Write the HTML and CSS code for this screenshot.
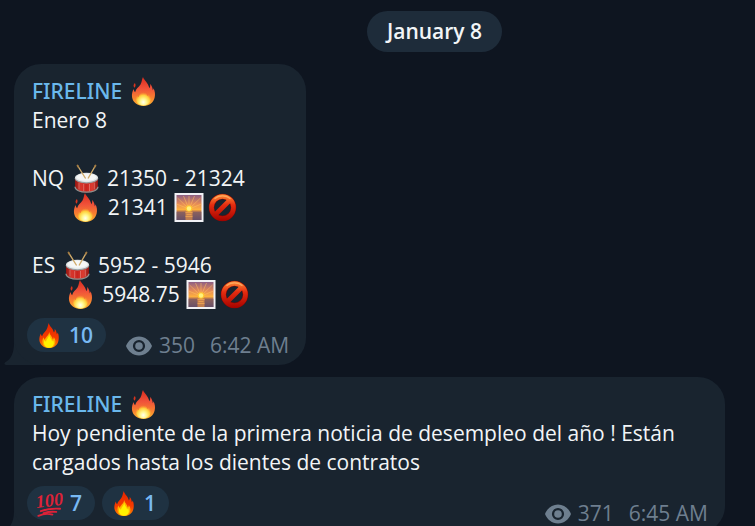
FILE: index.html
```html
<!DOCTYPE html>
<html lang="es">
<head>
<meta charset="utf-8">
<title>FIRELINE</title>
<link rel="stylesheet" href="styles.css">
</head>
<body>
<svg class="sprite" aria-hidden="true">
  <defs>
    <linearGradient id="flame" x1="0" y1="0" x2="0" y2="1">
      <stop offset="0" stop-color="#d92c1e"/><stop offset=".4" stop-color="#f0523a"/><stop offset=".72" stop-color="#f8812f"/><stop offset="1" stop-color="#ffb832"/>
    </linearGradient>
    <radialGradient id="glow" cx=".5" cy=".8" r=".6">
      <stop offset="0" stop-color="#fffff0"/><stop offset=".35" stop-color="#fff68a"/><stop offset=".7" stop-color="#ffcf3c"/><stop offset="1" stop-color="#fb9a35" stop-opacity="0"/>
    </radialGradient>
    <linearGradient id="hot" x1="0" y1="0" x2="0" y2="1">
      <stop offset="0" stop-color="#e32400"/><stop offset=".6" stop-color="#f53b00"/><stop offset="1" stop-color="#ff8a00"/>
    </linearGradient>
    <linearGradient id="shell" x1="0" y1="0" x2="1" y2="0">
      <stop offset="0" stop-color="#8e1612"/><stop offset=".25" stop-color="#d8362c"/><stop offset=".5" stop-color="#c9251f"/><stop offset=".75" stop-color="#dd3d31"/><stop offset="1" stop-color="#8e1612"/>
    </linearGradient>
    <linearGradient id="sky" x1="0" y1="0" x2="0" y2="1">
      <stop offset="0" stop-color="#8c5f85"/><stop offset=".35" stop-color="#e58a57"/><stop offset=".6" stop-color="#ffb33c"/><stop offset=".64" stop-color="#b9784f"/><stop offset="1" stop-color="#685069"/>
    </linearGradient>
    <linearGradient id="ban" gradientUnits="userSpaceOnUse" x1="0" y1="2" x2="0" y2="27">
      <stop offset="0" stop-color="#ff8a35"/><stop offset=".4" stop-color="#e42c10"/><stop offset="1" stop-color="#a90500"/>
    </linearGradient>
  </defs>
  <symbol id="fire" viewBox="0 0 31 29">
    <path fill="url(#flame)" d="M14.500 0c.8 3 5.500 6.200 6.300 11.200.9-.9 1.200-2.700.7-4.400 2.300 2.400 2.500 4.600 2.800 6.500.5-.5.7-1.200.7-2 1.500 3 1.900 5.800 1.200 9C25.200 25.500 21 29 15 29 9 29 4.500 25.400 3.600 20.500c-.6-3.600.5-6.500 1.400-8.500.4 1.500.7 2.400 1.600 3.200C7.600 11.500 10 10.500 12 7.500 13.500 5 13.200 2.200 14.500 0z"/>
    <path fill="#d8341e" d="M6.400 6c1.100 1.700.7 3-.2 4.800C4.500 9.500 4.800 7.700 6.400 6z"/>
    <path fill="url(#glow)" d="M15 12c1 3 3.500 4.500 4 7 1-.6 1.300-1.600 1.300-2.800 2.400 2.800 2.900 6 1.200 8.900-1.400 2.300-3.600 3.400-6.500 3.400s-5.500-1.300-6.800-3.500c-1.600-2.700-1-5.500.2-7.700.2 1.400.7 2.300 1.700 2.900.3-3.500 3.900-4.400 4.900-8.200z"/>
  </symbol>
  <symbol id="fire-hot" viewBox="0 0 20 25">
    <path fill="url(#hot)" d="M9.700 0c.4 3 4.300 5 5.200 9.500.8-.8 1-2.200.7-3.700 1.900 2.100 2 3.900 2.200 5.500.5-.4.8-1 .9-1.700C20 12.500 20 15 19.400 18 18.400 22.300 15 25 10 25S1.400 22.200.5 18C0 15.200.8 12.500 1.900 10.500c.1 1.300.5 2 1.200 2.700C3.900 10.500 5.500 9.500 7.300 7 8.800 4.900 8.800 2 9.700 0z"/>
    <path fill="#ffb000" d="M10.300 9c.5 3.300 3.200 4.500 3.400 7.500.8-.6 1-1.300 1-2.400 2 2.600 2.300 5.500.8 7.900-1.200 2-3.200 3-5.500 3s-4.600-1-5.700-3c-1.400-2.500-1-5.300.2-7.700.2 1.300.6 2 1.400 2.500C6.300 14 9.700 13 10.300 9z"/>
    <path fill="#fff200" d="M10.300 12c.4 3 2.700 4 2.700 6.500.6-.3.900-.9 1-1.500 2 3.400.4 7.700-4 7.700s-6-4.200-4.400-7.700c.3.900.7 1.400 1.400 1.700.1-2.700 2.800-3.900 3.300-6.700z"/>
  </symbol>
  <symbol id="drum" viewBox="0 0 31 29">
    <path fill="url(#shell)" d="M4.500 14v9c0 3 5 5.300 11.500 5.300S27.500 26 27.500 23v-9z"/>
    <path fill="none" stroke="#8d918f" stroke-width="1.200" d="M4.500 22.800c0 3.200 5 5.400 11.500 5.400s11.500-2.200 11.500-5.400"/>
    <path fill="none" stroke="#efa39a" stroke-width=".5" d="M8.500 18.500v7M13.200 20v7M19 20v7M23.800 18.500v7"/>
    <ellipse cx="16" cy="14.500" rx="11.700" ry="5" fill="#9a9fa1"/>
    <ellipse cx="16" cy="13.500" rx="11.500" ry="4.700" fill="#e5e9ea"/>
    <ellipse cx="16" cy="13.300" rx="9.800" ry="3.500" fill="#f6f7f6"/>
    <path stroke="#cfaa6a" stroke-width="1.400" stroke-linecap="round" d="M7.300 2l7.500 12M24.700 2l-6.900 12"/>
    <path stroke="#a27b43" stroke-width="1.800" stroke-linecap="round" d="M7 1.500l.7 1.200M25 1.500l-.7 1.200"/>
  </symbol>
  <symbol id="sunrise" viewBox="0 0 31 29">
    <path fill="#f1f1f5" d="M1 0h29v29H1z"/>
    <path fill="url(#sky)" d="M3 2h25v25H3z"/>
    <path stroke="#ffc260" stroke-width=".9" opacity=".6" d="M15.500 16V3M15.500 16L10 3M15.500 16L21 3M15.500 16L4 5M15.500 16L27 5M15.500 16L3 11M15.500 16L28 11"/>
    <path fill="#675068" opacity=".5" d="M3 19h9v8H3zM19 19h9v8h-9z"/>
    <path fill="#d4884b" opacity=".8" d="M12 18h7v9h-7z"/>
    <path stroke="#f4aa52" stroke-width=".7" d="M12 19.500h7M13 21.500h5M12 23.500h7"/>
    <circle cx="15.500" cy="15.500" r="3.300" fill="#ffc52d"/>
    <circle cx="15.500" cy="15.500" r="2.200" fill="#fff27c"/>
  </symbol>
  <symbol id="banned" viewBox="0 0 31 29">
    <circle cx="17" cy="14.500" r="11" fill="none" stroke="#8d0500" stroke-width="5.400"/>
    <path stroke="url(#ban)" stroke-width="4.800" d="M9.500 22L24.500 7"/>
    <circle cx="17" cy="14.500" r="11" fill="none" stroke="url(#ban)" stroke-width="4.600"/>
    <path fill="none" stroke="#ffb169" stroke-width="1.200" opacity=".8" d="M9 5.800c4.300-4 11.600-4 16 0"/>
  </symbol>
  <symbol id="hundred" viewBox="0 0 28 28">
    <text class="hundred-text" x="0" y="17" transform="rotate(-7 14 14)">100</text>
    <path fill="none" stroke="#dd2238" stroke-width="2" stroke-linecap="round" d="M5 22Q14 18.700 25 19.500M8 24Q14 22 21 22.700M2.500 26.800Q10 23.500 17 25.500"/>
  </symbol>
  <symbol id="eye" viewBox="0 0 26 20">
    <path fill="#6e7f8f" fill-rule="evenodd" d="M13 .5C7 .5 2.200 4.400 0 10c2.200 5.600 7 9.500 13 9.500S23.800 15.600 26 10C23.800 4.400 19 .5 13 .5zM13 3.900a6.100 6.100 0 1 1 0 12.200 6.100 6.100 0 0 1 0-12.200z"/>
    <circle cx="13" cy="10" r="3.800" fill="#6e7f8f"/>
  </symbol>
</svg>
<main class="chat">
  <time class="date">January 8</time>

  <article class="bubble">
    <h2 class="author">FIRELINE <svg class="emoji" role="img" aria-label="🔥"><use href="#fire"/></svg></h2>
    <p class="text">Enero 8

NQ <svg class="emoji" role="img" aria-label="🥁"><use href="#drum"/></svg> 21350 - 21324
       <svg class="emoji" role="img" aria-label="🔥"><use href="#fire"/></svg> 21341 <svg class="emoji" role="img" aria-label="🌅"><use href="#sunrise"/></svg><svg class="emoji" role="img" aria-label="🚫"><use href="#banned"/></svg>

ES <svg class="emoji" role="img" aria-label="🥁"><use href="#drum"/></svg> 5952 - 5946
      <svg class="emoji" role="img" aria-label="🔥"><use href="#fire"/></svg> 5948.75 <svg class="emoji" role="img" aria-label="🌅"><use href="#sunrise"/></svg><svg class="emoji" role="img" aria-label="🚫"><use href="#banned"/></svg></p>
    <footer class="footer">
      <div class="reactions">
        <button class="reaction" type="button"><svg class="flame" role="img" aria-label="🔥"><use href="#fire-hot"/></svg>10</button>
      </div>
      <div class="meta"><svg class="eye" role="img" aria-label="Views"><use href="#eye"/></svg><span>350</span><time class="time">6:42 AM</time></div>
    </footer>
    <svg class="tail" viewBox="0 0 36 28" aria-hidden="true"><path d="M10 0v6C10 16 7 22 1 25.500Q-1 28 4 28H36V0z"/></svg>
  </article>

  <article class="bubble">
    <h2 class="author">FIRELINE <svg class="emoji" role="img" aria-label="🔥"><use href="#fire"/></svg></h2>
    <p class="text">Hoy pendiente de la primera noticia de desempleo del año ! Están cargados hasta los dientes de contratos</p>
    <footer class="footer">
      <div class="reactions">
        <button class="reaction" type="button"><svg class="hundred" role="img" aria-label="💯"><use href="#hundred"/></svg>7</button>
        <button class="reaction" type="button"><svg class="flame" role="img" aria-label="🔥"><use href="#fire-hot"/></svg>1</button>
      </div>
      <div class="meta"><svg class="eye" role="img" aria-label="Views"><use href="#eye"/></svg><span>371</span><time class="time">6:45 AM</time></div>
    </footer>
    <svg class="tail" viewBox="0 0 36 28" aria-hidden="true"><path d="M10 0v6C10 16 7 22 1 25.500Q-1 28 4 28H36V0z"/></svg>
  </article>
</main>
</body>
</html>
```
FILE: styles.css
```css
* {
  box-sizing: border-box;
}

body {
  margin: 0;
  background: #0e1520;
  color: #f2f5f7;
  font: 21px/29px "Open Sans", "Noto Sans", sans-serif;
}

.sprite {
  position: absolute;
  width: 0;
  height: 0;
}

.chat {
  display: flex;
  flex-direction: column;
  align-items: flex-start;
  gap: 12px;
  height: 100vh;
  padding: 11px 30px 0 14px;
  overflow: hidden;
}

.date {
  align-self: center;
  flex-shrink: 0;
  margin-left: 130px;
  padding: 6px 20px;
  border-radius: 21px;
  background: #1e2c3a;
  font-weight: 600;
}

.bubble {
  position: relative;
  flex-shrink: 0;
  padding: 13px 17px 13px 18px;
  border-radius: 27px;
  background: #19242f;
}

.author,
.text {
  margin: 0;
  font-size: 21px;
}

.author {
  color: #6ab8ec;
  font-family: "Noto Sans", sans-serif;
  font-weight: 500;
}

.text {
  white-space: pre-wrap;
}

.emoji {
  width: 32px;
  height: 29px;
  vertical-align: top;
}

.footer {
  display: flex;
  justify-content: space-between;
  gap: 20px;
  margin-top: 9px;
}

.reactions {
  display: flex;
  gap: 7px;
  margin-left: -5px;
}

.reaction {
  display: flex;
  align-items: center;
  gap: 7px;
  height: 34px;
  padding: 0 13px 0 9px;
  border: 0;
  border-radius: 17px;
  background: #1f3242;
  color: #78b9f3;
  font: 600 21px/34px "Open Sans", sans-serif;
}

.flame {
  width: 26px;
  height: 25px;
}

.hundred {
  width: 27px;
  height: 27px;
}

.hundred-text {
  fill: #dd2238;
  font: italic bold 19px "Liberation Serif", serif;
}

.meta {
  display: flex;
  align-items: center;
  align-self: flex-end;
  gap: 7px;
  margin-bottom: -8px;
  color: #6e7f8f;
}

.time {
  margin-left: 8px;
}

.eye {
  width: 26px;
  height: 20px;
}

.tail {
  position: absolute;
  z-index: -1;
  bottom: 0;
  left: -10px;
  width: 36px;
  height: 28px;
  fill: #19242f;
}
```
